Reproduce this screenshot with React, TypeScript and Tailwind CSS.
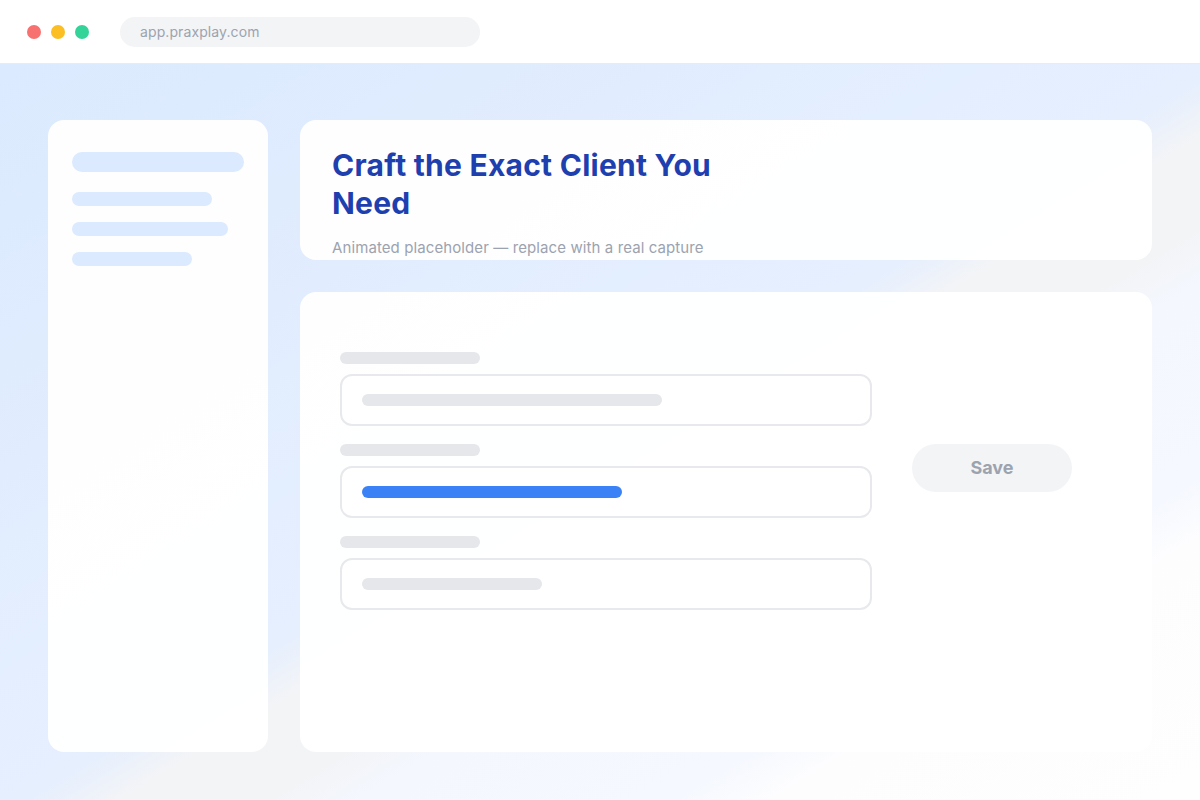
import React from "react";

const FieldRow = ({ fill, width }: { fill: string; width: string }) => (
  <div className="flex flex-col gap-2.5">
    <div className="h-3 w-[140px] rounded-full bg-[#e5e7eb]" />
    <div className="h-[52px] rounded-xl border-2 border-[#e8e9ec] bg-white flex items-center pl-5">
      <div className={`h-3 rounded-full ${fill} ${width}`} />
    </div>
  </div>
);

const App = () => {
  return (
    <div className="w-full h-[800px] flex flex-col font-['Inter','Liberation_Sans',sans-serif] overflow-hidden">
      {/* browser chrome */}
      <div className="h-16 shrink-0 bg-white border-b border-[#e9ebef] flex items-center pl-[27px]">
        <div className="flex items-center gap-2.5">
          <span className="w-3.5 h-3.5 rounded-full bg-[#f87171]" />
          <span className="w-3.5 h-3.5 rounded-full bg-[#fbbf24]" />
          <span className="w-3.5 h-3.5 rounded-full bg-[#34d399]" />
        </div>
        <div className="ml-[31px] w-[360px] h-[30px] rounded-full bg-[#f3f4f6] flex items-center pl-5 text-sm text-[#9ca3af] tracking-[0.1px]">
          app.praxplay.com
        </div>
      </div>

      {/* page */}
      <div className="flex-1 flex gap-8 pt-14 px-12 pb-12 bg-[linear-gradient(to_bottom_right,#dbeafe_0%,#e6effe_51%,#f3f4f6_55%,#f3f4f6_61%,#f4f7fe_65%,#f5f8fe_78%,#fdfdfe_82%,#fefefe_100%)]">
        <aside className="w-[220px] shrink-0 rounded-2xl bg-white/95 pt-8 px-6 flex flex-col">
          <div className="h-5 w-[172px] rounded-full bg-[#dbeafe]" />
          <div className="mt-5 h-3.5 w-[140px] rounded-full bg-[#dbeafe]" />
          <div className="mt-4 h-3.5 w-[156px] rounded-full bg-[#dbeafe]" />
          <div className="mt-4 h-3.5 w-[120px] rounded-full bg-[#dbeafe]" />
        </aside>

        <div className="flex-1 flex flex-col gap-8">
          <div className="h-[140px] shrink-0 overflow-hidden rounded-2xl bg-white/95 pt-[26px] px-8">
            <h1 className="max-w-[420px] text-[30px] leading-[38px] font-bold text-[#1e40af] tracking-[0.25px]">
              Craft the Exact Client You Need
            </h1>
            <p className="mt-4 text-[15px] leading-5 text-[#9ca3af] tracking-[0.1px]">
              Animated placeholder — replace with a real capture
            </p>
          </div>

          <div className="flex-1 rounded-2xl bg-white/95 pt-[60px] pl-10 flex gap-10">
            <div className="w-[532px] flex flex-col gap-[18px]">
              <FieldRow fill="bg-[#e5e7eb]" width="w-[300px]" />
              <FieldRow fill="bg-[#3b82f6]" width="w-[260px]" />
              <FieldRow fill="bg-[#e5e7eb]" width="w-[180px]" />
            </div>
            <div className="mt-[92px]">
              <button className="w-[160px] h-12 rounded-full bg-[#f3f4f6] text-lg font-bold text-[#9ca3af]">
                Save
              </button>
            </div>
          </div>
        </div>
      </div>
    </div>
  );
};

export default App;
